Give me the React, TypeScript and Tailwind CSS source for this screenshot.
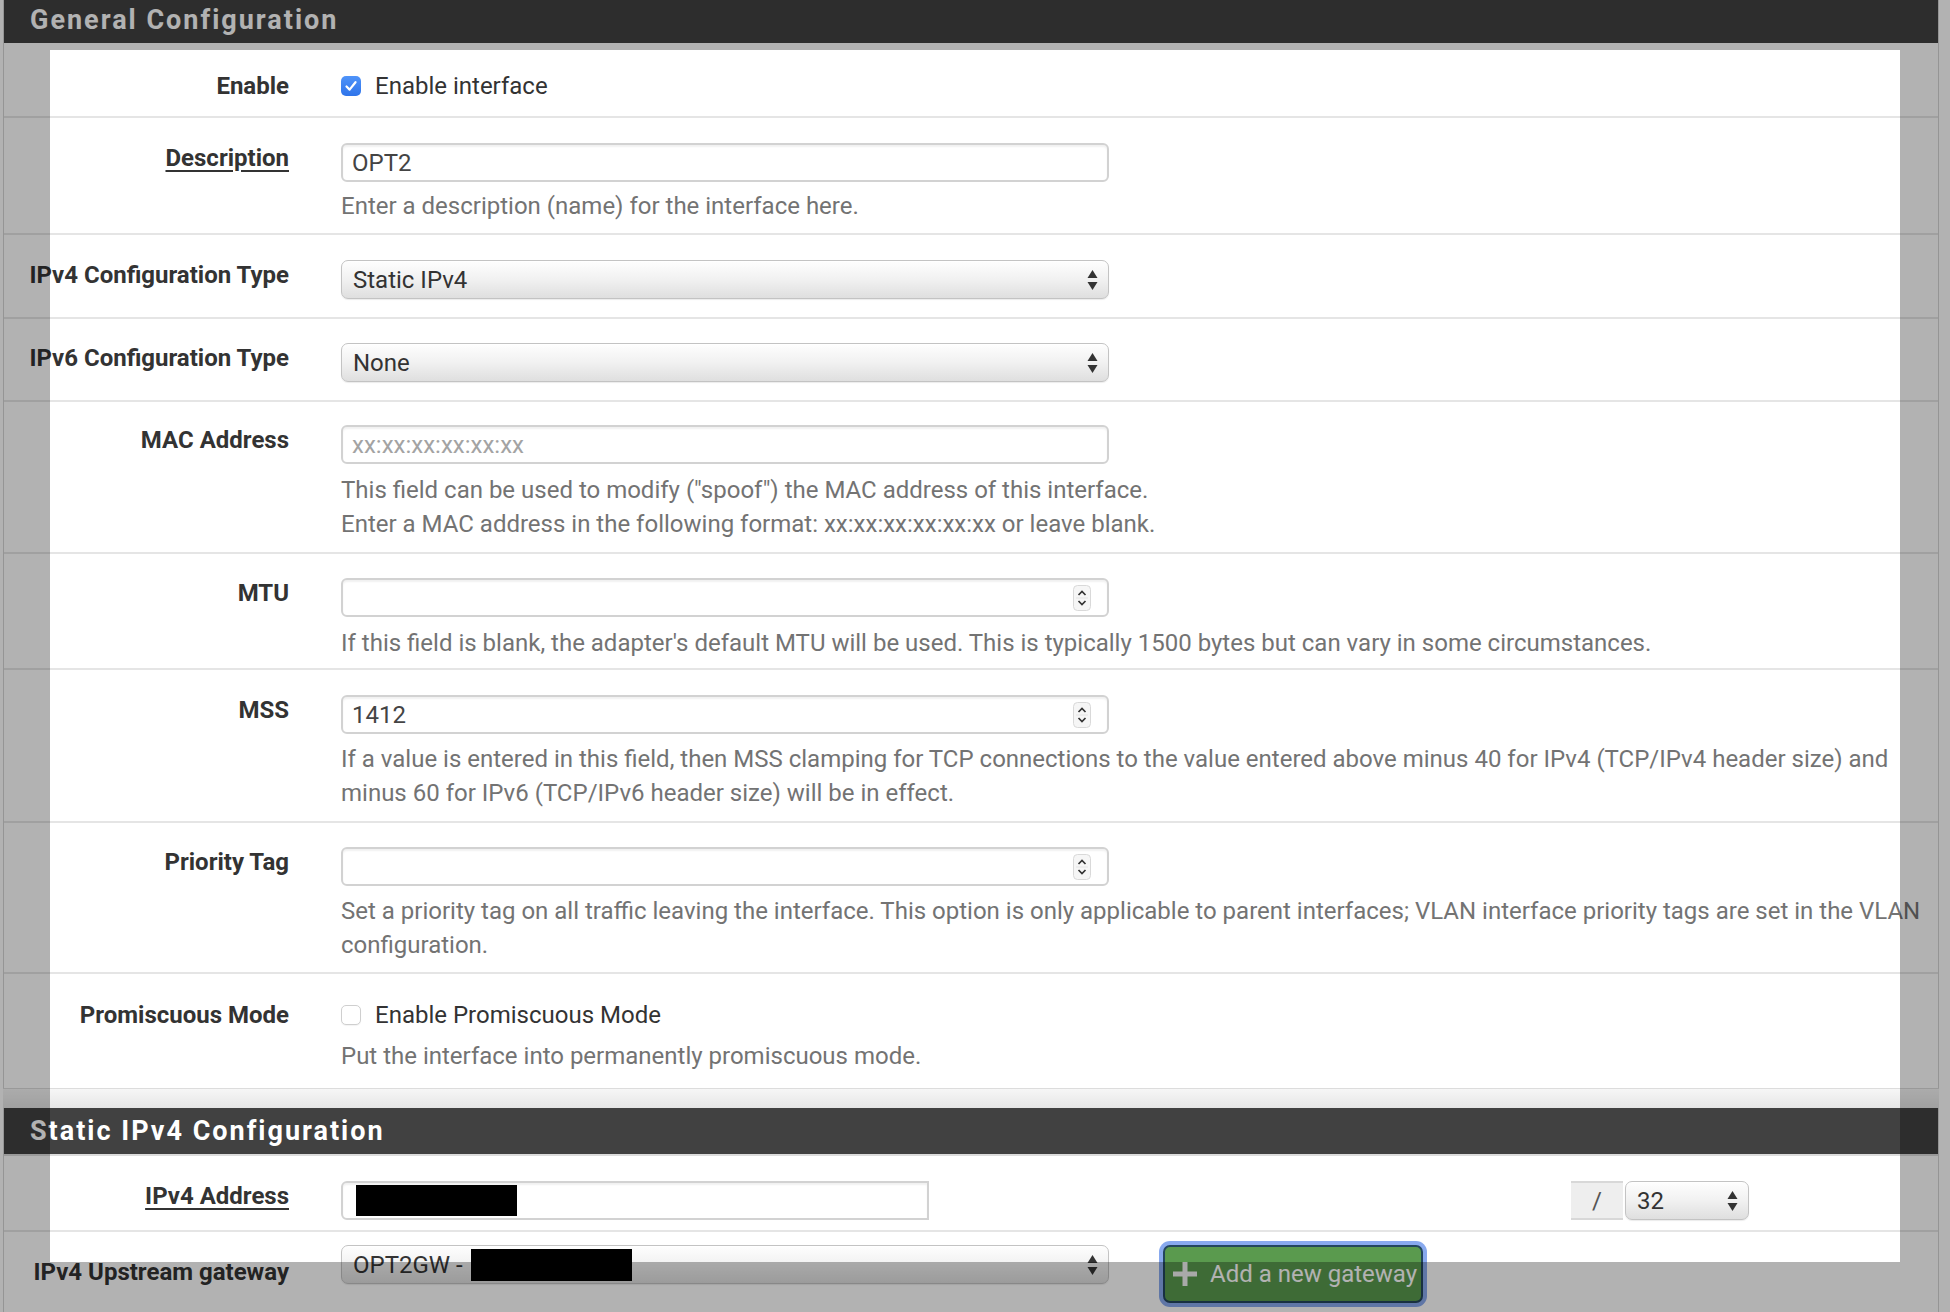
import React from 'react';

const Arrows = () => (
  <svg width="11" height="22" viewBox="0 0 11 22" className="shrink-0">
    <path d="M5.5 1 L10.5 9 L0.5 9 Z" fill="#333" />
    <path d="M5.5 21 L10.5 13 L0.5 13 Z" fill="#333" />
  </svg>
);

const Spinner = () => (
  <svg width="18" height="26" viewBox="0 0 18 26" className="shrink-0">
    <rect x="0.5" y="0.5" width="17" height="25" rx="4" fill="#f6f6f6" stroke="#d9d9d9" />
    <line x1="3" y1="13" x2="15" y2="13" stroke="#e4e4e4" />
    <path d="M5.5 10 9 6.5 12.5 10" fill="none" stroke="#333" strokeWidth="1.7" />
    <path d="M5.5 16 9 19.5 12.5 16" fill="none" stroke="#333" strokeWidth="1.7" />
  </svg>
);

const Checkbox = ({ checked }: { checked?: boolean }) =>
  checked ? (
    <span className="flex h-[20px] w-[20px] shrink-0 items-center justify-center rounded-[5px] bg-linear-to-b from-[#4f93f9] to-[#2f74ea]">
      <svg width="14" height="14" viewBox="0 0 14 14">
        <path d="M2.5 7.5 5.6 10.6 11.5 3.2" fill="none" stroke="#fff" strokeWidth="2.2" strokeLinecap="round" strokeLinejoin="round" />
      </svg>
    </span>
  ) : (
    <span className="h-[20px] w-[20px] shrink-0 rounded-[5px] border border-[#cfcfcf] bg-white shadow-[0_1px_1px_rgba(0,0,0,0.05)]" />
  );

const TextInput = ({ children, number }: { children?: React.ReactNode; number?: boolean }) => (
  <div className="flex h-[39px] w-[768px] items-center justify-between rounded-[6px] border-2 border-[#d2d2d2] bg-white pl-[9px] pr-[16px] text-[#444] shadow-[inset_0_2px_2px_rgba(0,0,0,0.06)]">
    <span>{children}</span>
    {number && <Spinner />}
  </div>
);

const Select = ({ children, className = 'w-[768px]' }: { children: React.ReactNode; className?: string }) => (
  <div
    className={`flex h-[39px] items-center justify-between rounded-[7px] border border-[#c3c3c3] bg-linear-to-b from-[#fefefe] via-[#f1f1f1] to-[#dfdfdf] pl-[11px] pr-[10px] text-[#333] shadow-[inset_0_1px_0_#fff,0_1px_1px_rgba(0,0,0,0.08)] ${className}`}
  >
    <span className="flex items-center whitespace-nowrap">{children}</span>
    <Arrows />
  </div>
);

const Help = ({ className, children }: { className: string; children: React.ReactNode }) => (
  <div className={`whitespace-nowrap text-[#737373] ${className}`}>{children}</div>
);

const Row = ({
  label,
  underline,
  pad,
  labelPad,
  children,
  last,
}: {
  label: string;
  underline?: boolean;
  pad: string;
  labelPad: string;
  children: React.ReactNode;
  last?: boolean;
}) => (
  <div className={`flex ${pad} ${last ? '' : 'border-b-2 border-[#e5e5e5]'}`}>
    <div className={`w-[285px] shrink-0 text-right font-bold text-[#333] ${labelPad}`}>
      <span className={underline ? 'underline decoration-2 underline-offset-[4px]' : ''}>{label}</span>
    </div>
    <div className="ml-[52px] min-w-0 flex-1">{children}</div>
  </div>
);

export default function App() {
  return (
    <div className="relative h-[1312px] w-[1950px] overflow-hidden bg-white font-['Roboto','Liberation_Sans',sans-serif] text-[24px] leading-[34px]">
      <div className="ml-[3px] w-[1936px]">
        {/* General Configuration */}
        <section className="border-x border-[#d6d6d6] bg-white">
          <div className="flex h-[43px] items-center bg-[#414141] pb-[4px] pl-[26px] text-[27px] font-bold tracking-[2px] text-white">
            General Configuration
          </div>

          <Row label="Enable" pad="pt-[26px] pb-[13px]" labelPad="">
            <label className="flex items-center gap-[14px] text-[#333]">
              <Checkbox checked />
              Enable interface
            </label>
          </Row>

          <Row label="Description" underline pad="pt-[25px] pb-[10px]" labelPad="-mt-[2px]">
            <TextInput>OPT2</TextInput>
            <Help className="mt-[7px]">Enter a description (name) for the interface here.</Help>
          </Row>

          <Row label="IPv4 Configuration Type" pad="pt-[25px] pb-[18px]" labelPad="-mt-[2px]">
            <Select>Static IPv4</Select>
          </Row>

          <Row label="IPv6 Configuration Type" pad="pt-[24px] pb-[18px]" labelPad="-mt-[2px]">
            <Select>None</Select>
          </Row>

          <Row label="MAC Address" pad="pt-[23px] pb-[11px]" labelPad="-mt-[2px]">
            <TextInput>
              <span className="text-[#a3a3a3]">xx:xx:xx:xx:xx:xx</span>
            </TextInput>
            <Help className="mt-[9px]">
              This field can be used to modify ("spoof") the MAC address of this interface.
              <br />
              Enter a MAC address in the following format: xx:xx:xx:xx:xx:xx or leave blank.
            </Help>
          </Row>

          <Row label="MTU" pad="pt-[24px] pb-[8px]" labelPad="-mt-[2px]">
            <TextInput number />
            <Help className="mt-[9px]">
              If this field is blank, the adapter's default MTU will be used. This is typically 1500 bytes but can vary in some circumstances.
            </Help>
          </Row>

          <Row label="MSS" pad="pt-[25px] pb-[11px]" labelPad="-mt-[2px]">
            <TextInput number>1412</TextInput>
            <Help className="mt-[8px]">
              If a value is entered in this field, then MSS clamping for TCP connections to the value entered above minus 40 for IPv4 (TCP/IPv4 header size) and
              <br />
              minus 60 for IPv6 (TCP/IPv6 header size) will be in effect.
            </Help>
          </Row>

          <Row label="Priority Tag" pad="pt-[24px] pb-[10px]" labelPad="-mt-[2px]">
            <TextInput number />
            <Help className="mt-[8px]">
              Set a priority tag on all traffic leaving the interface. This option is only applicable to parent interfaces; VLAN interface priority tags are set in the VLAN
              <br />
              configuration.
            </Help>
          </Row>

          <Row label="Promiscuous Mode" pad="pt-[24px] pb-[15px]" labelPad="" last>
            <label className="flex items-center gap-[14px] text-[#333]">
              <Checkbox />
              Enable Promiscuous Mode
            </label>
            <Help className="mt-[7px]">Put the interface into permanently promiscuous mode.</Help>
          </Row>
        </section>

        <div className="h-[20px] border-t border-[#dcdcdc] bg-linear-to-b from-[#f6f6f6] to-[#e6e6e6]" />

        {/* Static IPv4 Configuration */}
        <section className="border-x border-[#d6d6d6] bg-white">
          <div className="flex h-[48px] items-center border-b-2 border-[#dcdcdc] bg-[#414141] pl-[26px] text-[27px] font-bold tracking-[2px] text-white">
            Static IPv4 Configuration
          </div>

          <Row label="IPv4 Address" underline pad="pt-[25px] pb-[10px]" labelPad="-mt-[2px]">
            <div className="flex items-center">
              <div className="flex h-[39px] w-[588px] items-center rounded-l-[6px] border-2 border-[#d2d2d2] bg-white pl-[13px] shadow-[inset_0_2px_2px_rgba(0,0,0,0.06)]">
                <span className="h-[31px] w-[161px] bg-black" />
              </div>
              <div className="ml-[642px] flex h-[39px] w-[52px] items-center justify-center border-y-2 border-[#d8d8d8] bg-[#eeeeee] text-[#555]">
                /
              </div>
              <Select className="ml-[2px] w-[124px]">32</Select>
            </div>
          </Row>

          <Row label="IPv4 Upstream gateway" pad="pt-[13px] pb-[20px]" labelPad="pt-[10px]" last>
            <div className="flex items-start">
              <Select>
                OPT2GW -
                <span className="ml-[8px] inline-block h-[32px] w-[161px] bg-black" />
              </Select>
              <button className="ml-[54px] flex h-[58px] w-[260px] items-center gap-[12px] rounded-[7px] border-2 border-[#23465e] bg-[#5a9a4e] pl-[7px] text-white shadow-[0_0_0_4px_#88a9ee]">
                <svg width="26" height="26" viewBox="0 0 26 26" className="shrink-0">
                  <path d="M13 1 V25 M1 13 H25" stroke="#f2f2f2" strokeWidth="5" />
                </svg>
                Add a new gateway
              </button>
            </div>
          </Row>
        </section>
      </div>

      {/* screenshot-tool dimming outside the selection */}
      <div className="pointer-events-none absolute left-[50px] top-[50px] h-[1212px] w-[1850px] shadow-[0_0_0_3000px_rgba(0,0,0,0.3)]" />
    </div>
  );
}
